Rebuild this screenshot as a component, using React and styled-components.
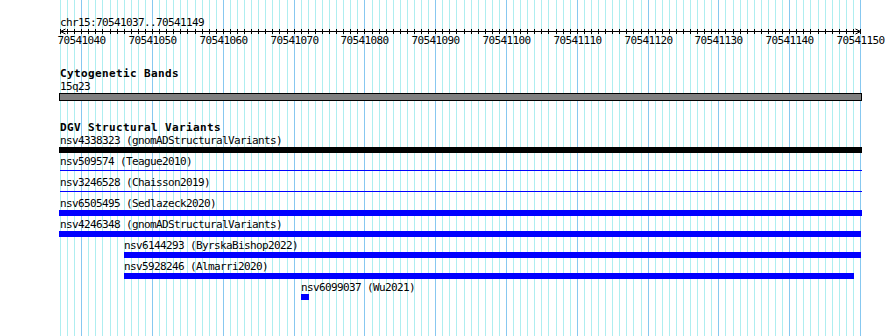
import React from "react";
import styled, { createGlobalStyle } from "styled-components";

const START = 70541037;
const END = 70541150;
const ORIGIN = 60;
const SCALE = 800 / (END - START);
const px = (i) => Math.round(i * SCALE);

const GlobalStyle = createGlobalStyle`
  html, body { margin: 0; padding: 0; background: #ffffff; }
  body { font-family: "DejaVu Sans Mono", "Liberation Mono", monospace; color: #000; }
`;

const Page = styled.div`
  position: relative;
  width: 890px;
  height: 336px;
  overflow: hidden;
  background: #ffffff;
`;

const GridLayer = styled.svg`
  position: absolute;
  left: 0;
  top: 0;
  width: 890px;
  height: 336px;
  z-index: 0;
`;

const Content = styled.div`
  position: relative;
  z-index: 1;
  display: flex;
  flex-direction: column;
  padding: 16px 0 0 ${ORIGIN}px;
`;

const RulerTitle = styled.div`
  font-size: 11px;
  line-height: 13px;
  letter-spacing: -0.62px;
  white-space: nowrap;
`;

const RulerSvg = styled.svg`
  display: block;
  overflow: visible;
  width: 802px;
  height: 20px;
`;

const RulerLabel = styled.text`
  font-family: "DejaVu Sans Mono", "Liberation Mono", monospace;
  font-size: 11px;
  letter-spacing: -0.62px;
  fill: #000;
`;

const Track = styled.section`
  display: flex;
  flex-direction: column;
  margin-top: ${(p) => p.$gap}px;
`;

const TrackTitle = styled.div`
  font-size: 11px;
  font-weight: bold;
  line-height: 12px;
  letter-spacing: 0.38px;
  white-space: nowrap;
`;

const Label = styled.div`
  font-size: 11px;
  line-height: 13px;
  letter-spacing: -0.62px;
  white-space: nowrap;
`;

const Band = styled.div`
  box-sizing: border-box;
  margin-left: -1px;
  width: 803px;
  height: 8px;
  border: 1px solid #000;
  background: #808080;
`;

const FeatureRow = styled.div`
  display: flex;
  flex-direction: column;
  height: 21px;
`;

const FeatureBar = styled.div`
  height: 6px;
  flex: none;
  box-sizing: border-box;
  background: ${(p) => (p.$thin ? "transparent" : p.$color)};
  border-top: ${(p) => (p.$thin ? `1px solid ${p.$color}` : "none")};
  margin-top: 0;
  padding-top: 0;
  ${(p) => (p.$thin ? "height: 1px; margin-top: 2px; margin-bottom: 3px;" : "")}
`;

const features = [
  { id: "nsv4338323", src: "gnomADStructuralVariants", left: 59, right: 862, color: "#000000" },
  { id: "nsv509574", src: "Teague2010", left: 60, right: 862, color: "#0000ff", thin: true },
  { id: "nsv3246528", src: "Chaisson2019", left: 60, right: 862, color: "#0000ff", thin: true },
  { id: "nsv6505495", src: "Sedlazeck2020", left: 59, right: 862, color: "#0000ff" },
  { id: "nsv4246348", src: "gnomADStructuralVariants", left: 59, right: 861, color: "#0000ff" },
  { id: "nsv6144293", src: "ByrskaBishop2022", left: 124, right: 861, color: "#0000ff" },
  { id: "nsv5928246", src: "Almarri2020", left: 124, right: 854, color: "#0000ff" },
  { id: "nsv6099037", src: "Wu2021", left: 301, right: 309, color: "#0000ff" },
];

function Grid() {
  const lines = [];
  for (let i = 0; i <= END - START; i++) {
    const pos = START + i;
    const x = ORIGIN + px(i) + 0.5;
    lines.push(
      <line
        key={i}
        x1={x}
        x2={x}
        y1={0}
        y2={336}
        stroke={pos % 10 === 0 ? "#87c8f0" : "#aeeef0"}
        strokeWidth={1}
      />
    );
  }
  return (
    <GridLayer viewBox="0 0 890 336" aria-hidden="true">
      {lines}
    </GridLayer>
  );
}

function Ruler() {
  const ticks = [];
  const labels = [];
  for (let i = 0; i <= END - START; i++) {
    const pos = START + i;
    const x = px(i) + 0.5;
    ticks.push(<line key={i} x1={x} x2={x} y1={0} y2={5} stroke="#000" strokeWidth={1} />);
    if (pos % 10 === 0) {
      labels.push(
        <RulerLabel key={pos} x={x} y={15} textAnchor="middle">
          {pos}
        </RulerLabel>
      );
    }
  }
  const last = px(END - START) + 0.5;
  return (
    <RulerSvg viewBox="0 0 802 20">
      <line x1={0} x2={last} y1={2.5} y2={2.5} stroke="#000" strokeWidth={1} />
      {ticks}
      <polyline points="5.5,0 0.5,2.5 5.5,5" fill="none" stroke="#000" strokeWidth={1} />
      <polyline points={`${last - 5},0 ${last},2.5 ${last - 5},5`} fill="none" stroke="#000" strokeWidth={1} />
      {labels}
    </RulerSvg>
  );
}

export default function App() {
  return (
    <>
      <GlobalStyle />
      <Page>
        <Grid />
        <Content>
          <RulerTitle>chr15:70541037..70541149</RulerTitle>
          <Ruler />
          <Track $gap={19}>
            <TrackTitle>Cytogenetic Bands</TrackTitle>
            <Label>15q23</Label>
            <Band />
          </Track>
          <Track $gap={21}>
            <TrackTitle>DGV Structural Variants</TrackTitle>
            {features.map((f) => (
              <FeatureRow key={f.id}>
                <Label style={{ marginLeft: Math.max(f.left, ORIGIN) - ORIGIN }}>
                  {f.id} ({f.src})
                </Label>
                <FeatureBar
                  $color={f.color}
                  $thin={f.thin}
                  style={{ marginLeft: f.left - ORIGIN, width: f.right - f.left }}
                />
              </FeatureRow>
            ))}
          </Track>
        </Content>
      </Page>
    </>
  );
}
